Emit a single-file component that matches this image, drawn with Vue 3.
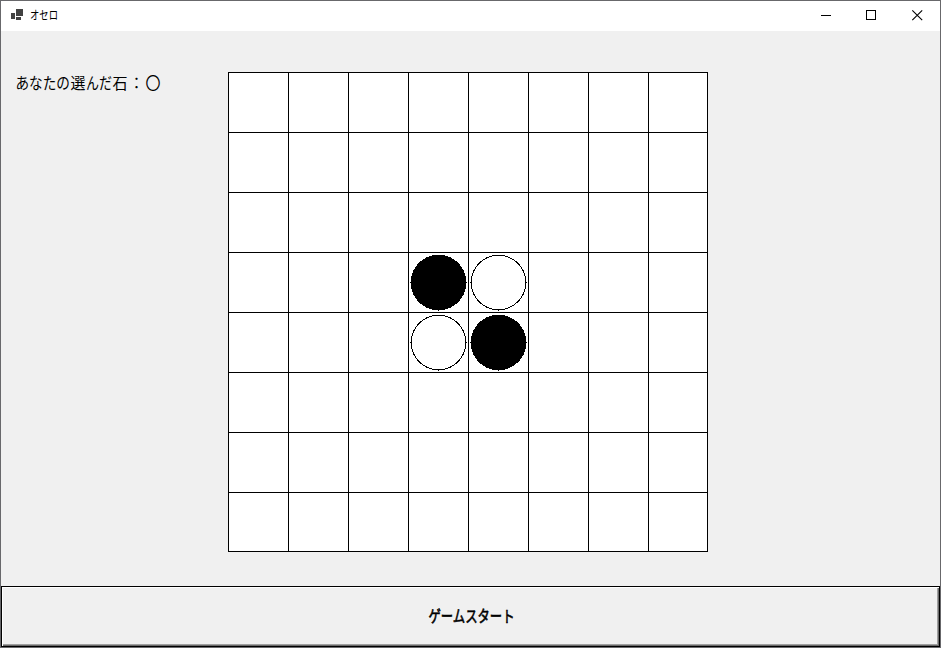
<script setup>
const stones = { 27: 'black', 28: 'white', 35: 'white', 36: 'black' }
const cells = Array.from({ length: 64 }, (_, i) => ({ id: i, stone: stones[i] }))
const label = [
  { t: 'あなたの', x: 15.5, w: 54.5 },
  { t: '選', x: 70.5, w: 15 },
  { t: 'んだ', x: 86, w: 26 },
  { t: '石', x: 112.5, w: 15 },
  { t: '：', x: 129, w: 15 },
  { t: '〇', x: 145.5, w: 15 },
]
</script>

<template>
  <div class="window">
    <header class="titlebar">
      <svg class="app-icon" width="12" height="11" viewBox="0 0 12 11" shape-rendering="crispEdges">
        <path fill="#424242" d="M5 0h7v7H5zM0 4h4v6H0zM5 8h5v3H5z" />
      </svg>
      <svg class="caption" width="40" height="30">
        <text x="0" y="19" textLength="28" lengthAdjust="spacingAndGlyphs">オセロ</text>
      </svg>
      <div class="controls">
        <svg width="45" height="30" shape-rendering="crispEdges"><path d="M16 14h10v1H16z" /></svg>
        <svg width="46" height="30" shape-rendering="crispEdges"><path fill="none" stroke="#000" d="M16.5 9.5h9v9h-9z" /></svg>
        <svg width="44" height="30"><path fill="none" stroke="#000" stroke-width="1.1" d="M16.3 9.3l9.9 9.9M26.2 9.3l-9.9 9.9" /></svg>
      </div>
    </header>
    <main class="content">
      <svg class="label" width="227" height="30">
        <text v-for="p in label" :key="p.t" :x="p.x - 1" y="16.5" :textLength="p.w" lengthAdjust="spacingAndGlyphs">{{ p.t }}</text>
      </svg>
      <div class="board">
        <div v-for="c in cells" :key="c.id" class="cell">
          <svg v-if="c.stone" width="59" height="59" shape-rendering="crispEdges">
            <circle cx="29.5" cy="29.5" r="27.3" stroke="#000" :fill="c.stone" />
            <path d="M1 29h1v1H1zM57 29h1v1h-1zM29 57h1v1h-1z" />
          </svg>
        </div>
      </div>
    </main>
    <button class="start">
      <svg width="110" height="40">
        <text x="12.5" y="25" textLength="86" lengthAdjust="spacingAndGlyphs">ゲームスタート</text>
      </svg>
    </button>
  </div>
</template>

<style>
body { margin: 0; overflow: hidden; }
</style>

<style scoped>
.window {
  box-sizing: border-box;
  width: 941px;
  height: 648px;
  border: 1px solid #68686b;
  background: #f0f0f0;
  display: flex;
  flex-direction: column;
  font-family: "Noto Sans CJK JP", sans-serif;
}
svg { display: block; }
.titlebar {
  height: 30px;
  flex: none;
  background: #fff;
  display: flex;
}
.app-icon { margin: 8px 7px 0 10px; }
.caption { font-size: 12px; }
.controls { margin-left: auto; display: flex; }
.content {
  height: 555px;
  flex: none;
  display: flex;
  align-items: flex-start;
  padding-top: 41px;
  box-sizing: border-box;
}
.label { font-size: 15.5px; }
.board {
  box-sizing: border-box;
  width: 480px;
  height: 480px;
  border: 1px solid #000;
  background: #fff;
  display: grid;
  grid-template-columns: repeat(7, 60px) 58px;
  grid-template-rows: repeat(7, 60px) 58px;
}
.cell {
  border-right: 1px solid #000;
  border-bottom: 1px solid #000;
}
.cell:nth-child(8n) { border-right: 0; }
.cell:nth-child(n + 57) { border-bottom: 0; }
.start {
  flex: none;
  height: 61px;
  margin: 0;
  padding: 0;
  border: 1px solid #000;
  border-radius: 0;
  background: #f0f0f0;
  box-shadow: inset 1px 1px #fff, inset -1px -1px #696969, inset -2px -2px #a0a0a0;
  display: flex;
  align-items: center;
  justify-content: center;
  font: 16px "Noto Sans CJK JP", sans-serif;
  color: #000;
}
.start text { stroke: #000; stroke-width: 0.6px; }
</style>
